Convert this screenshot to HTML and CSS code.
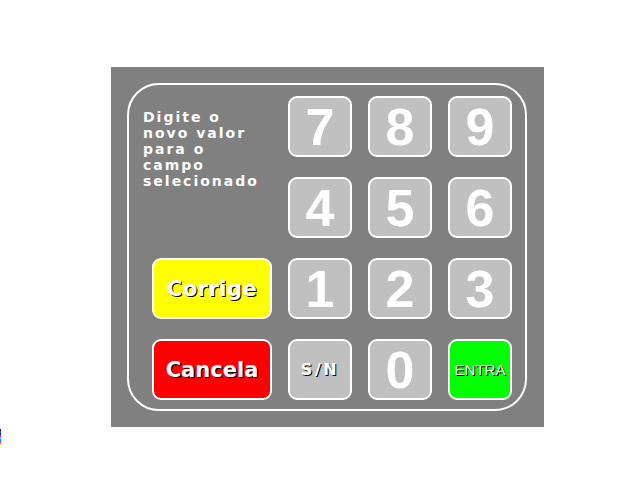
FILE: index.html
```html
<!DOCTYPE html>
<html lang="pt">
<head>
<meta charset="utf-8">
<title>Teclado</title>
<link rel="stylesheet" href="styles.css">
</head>
<body>
<div class="artifact"></div>
<div class="panel">
  <div class="frame">
    <div class="prompt">Digite o<br>novo valor<br>para o<br>campo<br>selecionado</div>
    <div class="key digit">7</div>
    <div class="key digit">8</div>
    <div class="key digit">9</div>
    <div class="key digit">4</div>
    <div class="key digit">5</div>
    <div class="key digit">6</div>
    <div class="btn corrige">Corrige</div>
    <div class="key digit">1</div>
    <div class="key digit">2</div>
    <div class="key digit">3</div>
    <div class="btn cancela">Cancela</div>
    <div class="key sn">S/N</div>
    <div class="key digit">0</div>
    <div class="key entra">ENTRA</div>
  </div>
</div>
</body>
</html>
```
FILE: styles.css
```css
html, body {
  margin: 0;
  padding: 0;
  background: #ffffff;
}
body {
  width: 640px;
  height: 480px;
  overflow: hidden;
  position: relative;
}
.artifact {
  position: absolute;
  left: 0;
  top: 429px;
  width: 1px;
  height: 16px;
  background: linear-gradient(to bottom, #000060 0 2px, #008080 2px 4px, #0000ff 4px 6px, #ff00ff 6px 8px, #00ffff 8px 10px, #0080ff 10px 12px, #ff00ff 12px 14px, #ffff00 14px 16px);
}
.panel {
  margin: 67px 0 0 111px;
  width: 433px;
  height: 360px;
  background: #808080;
  padding: 16px 0 0 16px;
  box-sizing: border-box;
}
.frame {
  width: 400px;
  height: 328px;
  box-sizing: border-box;
  border: 2px solid #ffffff;
  border-radius: 32px;
  padding: 11px 13px 9px 0;
  display: grid;
  grid-template-columns: 143px 64px 64px 64px;
  grid-template-rows: repeat(4, 61px);
  column-gap: 16px;
  row-gap: 20px;
}
.prompt {
  grid-column: 1;
  grid-row: 1 / span 2;
  padding: 13px 0 0 14px;
  font-family: "DejaVu Sans", Verdana, sans-serif;
  font-weight: bold;
  font-size: 14px;
  line-height: 16px;
  letter-spacing: 2px;
  color: #ffffff;
  white-space: nowrap;
}
.key {
  box-sizing: border-box;
  border: 2px solid #ffffff;
  border-radius: 9px;
  background: #c0c0c0;
  display: flex;
  align-items: center;
  justify-content: center;
  color: #ffffff;
}
.digit {
  font-family: "Liberation Sans", Arial, sans-serif;
  font-weight: bold;
  font-size: 52px;
  line-height: 1;
}
.btn {
  grid-column: 1;
  justify-self: end;
  width: 120px;
  box-sizing: border-box;
  border: 2px solid #ffffff;
  border-radius: 9px;
  display: flex;
  align-items: center;
  justify-content: center;
  font-family: "DejaVu Sans", Verdana, sans-serif;
  font-weight: bold;
  font-size: 21px;
  color: #ffffff;
  text-shadow: 1px 1px 0 #000000;
}
.corrige {
  background: #ffff00;
  letter-spacing: 0.5px;
}
.cancela {
  background: #ff0000;
}
.sn {
  font-family: "DejaVu Sans", Verdana, sans-serif;
  font-weight: bold;
  font-size: 16px;
  letter-spacing: 2.5px;
  text-shadow: 1px 1px 0 #000000;
}
.entra {
  background: #00ff00;
  font-family: "Liberation Sans", Arial, sans-serif;
  font-size: 15px;
  text-shadow: 1px 1px 0 #000000;
}
```
